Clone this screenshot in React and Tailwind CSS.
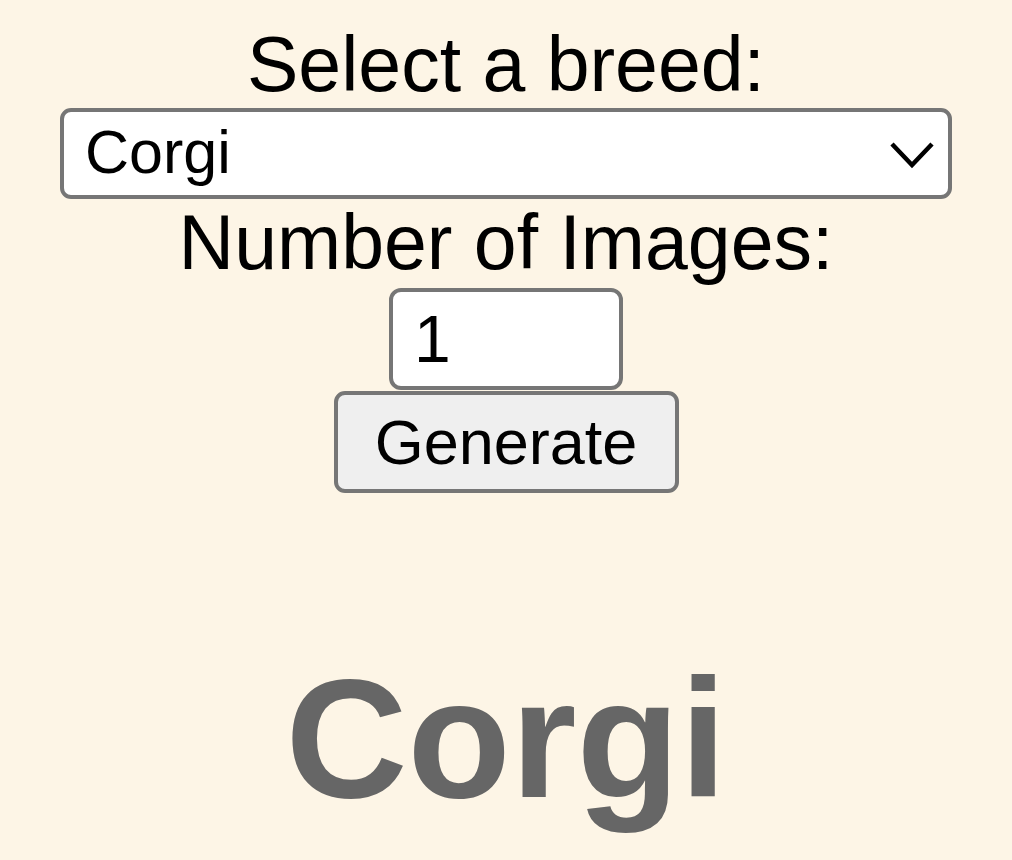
import { useState } from "react";

function App() {
  const [breed, setBreed] = useState("Corgi");
  const [count, setCount] = useState("1");

  return (
    <div className="min-h-screen bg-[#fdf5e6] flex flex-col items-center pt-[21px] font-['Liberation_Sans',Arial,sans-serif] text-black">
      <label className="text-[77px] leading-[87px]">Select a breed:</label>

      <div className="relative w-[892px] h-[91px]">
        <select
          value={breed}
          onChange={(e) => setBreed(e.target.value)}
          className="appearance-none w-full h-full bg-white border-[4px] border-[#767676] rounded-[11px] pl-[21px] pb-[4px] text-[61px] leading-[72px] outline-none"
        >
          <option>Corgi</option>
          <option>Husky</option>
          <option>Beagle</option>
          <option>Pug</option>
        </select>
        {/* chevron */}
        <svg
          className="absolute right-[17px] top-[33px] pointer-events-none"
          width="46"
          height="28"
          viewBox="0 0 46 28"
          fill="none"
        >
          <path d="M3 3 L23 24 L43 3" stroke="#000" strokeWidth="4.5" strokeLinecap="butt" strokeLinejoin="miter" />
        </svg>
      </div>

      <label className="text-[77px] leading-[87px]">Number of Images:</label>

      <input
        type="number"
        value={count}
        onChange={(e) => setCount(e.target.value)}
        className="mt-[2px] w-[234px] h-[102px] bg-white border-[4px] border-[#767676] rounded-[12px] pl-[21px] text-[66px] leading-none outline-none [appearance:textfield] [&::-webkit-inner-spin-button]:appearance-none [&::-webkit-outer-spin-button]:appearance-none"
      />

      <button className="mt-[1px] w-[345px] h-[102px] bg-[#efefef] border-[4px] border-[#767676] rounded-[11px] text-[63px] leading-none">
        Generate
      </button>

      <h1 className="mt-[145px] text-[169px] leading-[201px] font-bold text-[#666666]">{breed}</h1>
    </div>
  );
}

export default App;
